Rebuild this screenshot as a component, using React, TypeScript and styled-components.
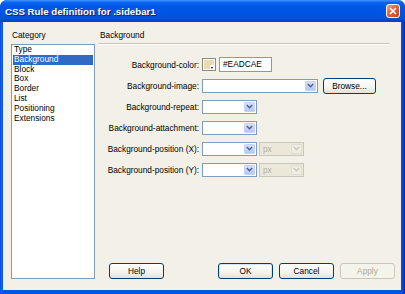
import React, {FC} from 'react';
import styled, {createGlobalStyle} from 'styled-components';

const GlobalStyle = createGlobalStyle`
  html, body {
    margin: 0;
    padding: 0;
    background: #fff;
  }
  body {
    font-family: "Liberation Sans", Arial, sans-serif;
  }
`;

const Window = styled.div`
  width: 405px;
  height: 294px;
  display: flex;
  flex-direction: column;
  background: linear-gradient(to right, #0831d9 0, #166aee 1px, #0055e5 3px, #0055e5 401px, #0a46d8 403px, #001ea0 405px);
  border-radius: 7px 7px 0 0;
  overflow: hidden;
`;

const TitleBar = styled.div`
  height: 22px;
  flex: none;
  display: flex;
  align-items: center;
  justify-content: space-between;
  padding: 0 5px 0 5px;
  background: linear-gradient(to bottom, #3d95ff 0%, #0a62f0 12%, #0056e6 30%, #0054e3 60%, #0050db 85%, #003fc0 100%);
`;

const Title = styled.span`
  color: #fff;
  font-weight: bold;
  font-size: 9.7px;
  text-shadow: 1px 1px 0 #0a1f80;
  letter-spacing: 0;
`;

const CloseButton = styled.div`
  width: 14px;
  height: 14px;
  box-sizing: border-box;
  border: 1px solid #fff;
  border-radius: 3px;
  background: linear-gradient(135deg, #f0a080 0%, #e2643c 45%, #c8411a 100%);
  display: flex;
  align-items: center;
  justify-content: center;
`;

const Body = styled.div`
  flex: 1;
  margin: 0 4px 4px 3px;
  background: #f3f1e7;
  display: flex;
  gap: 4px;
  padding: 8px 6px 11px 8px;
  font-size: 8.3px;
  color: #000;
  min-height: 0;
`;

const LeftColumn = styled.div`
  width: 84px;
  display: flex;
  flex-direction: column;
`;

const SectionLabel = styled.div`
  height: 10px;
  line-height: 10px;
  padding-left: 1px;
  margin-bottom: 4px;
`;

const CategoryList = styled.div`
  flex: 1;
  background: #fff;
  border: 1px solid #7f9db9;
  padding: 0 1px;
`;

const ListItem = styled.div<{ $selected?: boolean }>`
  height: 9.8px;
  line-height: 9.8px;
  padding-left: 1px;
  background: ${({$selected}) => ($selected ? '#316ac5' : 'transparent')};
  color: ${({$selected}) => ($selected ? '#fff' : '#000')};
`;

const RightColumn = styled.div`
  flex: 1;
  display: flex;
  flex-direction: column;
`;

const PanelHeader = styled.div`
  height: 10px;
  line-height: 10px;
  padding: 0 0 3px 1px;
  margin-right: 6px;
  border-bottom: 1px solid #c7c4b5;
  box-shadow: 0 1px 0 #fff;
`;

const Form = styled.div`
  margin-top: 10px;
  display: flex;
  flex-direction: column;
`;

const Row = styled.div`
  height: 21px;
  display: grid;
  grid-template-columns: 100px auto;
  column-gap: 3px;
  align-items: center;
`;

const Label = styled.span`
  text-align: right;
  white-space: nowrap;
`;

const Controls = styled.div<{ $gap?: number }>`
  display: flex;
  align-items: center;
  gap: ${({$gap}) => $gap ?? 2}px;
`;

const Swatch = styled.div`
  position: relative;
  width: 14px;
  height: 13px;
  box-sizing: border-box;
  border: 1px solid #8c8a80;
  background: #eadcae;
  box-shadow: inset 0 0 0 1px #fff;
`;

const SwatchArrow = styled.div`
  position: absolute;
  right: 0;
  bottom: 0;
  width: 5px;
  height: 5px;
  background: #fff;
  &::after {
    content: "";
    position: absolute;
    left: 1px;
    top: 2px;
    border-left: 1.5px solid transparent;
    border-right: 1.5px solid transparent;
    border-top: 2px solid #000;
  }
`;

const TextInput = styled.div`
  width: 53px;
  height: 15px;
  box-sizing: border-box;
  border: 1px solid #7f9db9;
  background: #fff;
  line-height: 13px;
  padding-left: 3px;
`;

const SelectBox = styled.div<{ $width: number; $disabled?: boolean }>`
  width: ${({$width}) => $width}px;
  height: 14px;
  box-sizing: border-box;
  border: 1px solid ${({$disabled}) => ($disabled ? '#c9c7ba' : '#7f9db9')};
  background: ${({$disabled}) => ($disabled ? '#ebe8da' : '#fff')};
  color: #b5b1a2;
  display: flex;
  align-items: center;
  justify-content: space-between;
  padding: 0 1px 0 3px;
`;

const ArrowButton = styled.div<{ $disabled?: boolean }>`
  width: 11px;
  height: 10px;
  border-radius: 1px;
  background: ${({$disabled}) =>
    $disabled ? '#efede3' : 'linear-gradient(to bottom, #d6e2fb, #b4c8f5)'};
  border: ${({$disabled}) => ($disabled ? '1px solid #e0ddd0' : '1px solid #c3d3fd')};
  box-sizing: border-box;
  display: flex;
  align-items: center;
  justify-content: center;
`;

const Button = styled.div<{ $width?: number; $disabled?: boolean; $default?: boolean }>`
  width: ${({$width}) => $width ?? 55}px;
  height: 16px;
  box-sizing: border-box;
  border: 1px solid ${({$disabled}) => ($disabled ? '#c9c7ba' : '#003c74')};
  border-radius: 3px;
  background: ${({$disabled}) =>
    $disabled ? '#f5f4ea' : 'linear-gradient(to bottom, #ffffff 0%, #f4f3ee 60%, #e3e1d7 100%)'};
  box-shadow: ${({$default}) => ($default ? 'inset 0 0 0 1px #cee7ff' : 'none')};
  color: ${({$disabled}) => ($disabled ? '#aca899' : '#000')};
  display: flex;
  align-items: center;
  justify-content: center;
`;

const ButtonRow = styled.div`
  margin-top: auto;
  display: flex;
  padding-left: 10px;
  gap: 6px;
`;

const Spacer = styled.div`
  flex: 1;
`;

const Chevron: FC<{ color: string }> = ({color}) => (
  <svg width="7" height="5" viewBox="0 0 7 5">
    <path d="M0.8 1 L3.5 3.7 L6.2 1" fill="none" stroke={color} strokeWidth="1.5" />
  </svg>
);

const Select: FC<{ width: number; disabled?: boolean; value?: string }> = ({width, disabled, value}) => (
  <SelectBox $width={width} $disabled={disabled}>
    <span>{value}</span>
    <ArrowButton $disabled={disabled}>
      <Chevron color={disabled ? '#c9c7ba' : '#4d6185'} />
    </ArrowButton>
  </SelectBox>
);

const categories = ['Type', 'Background', 'Block', 'Box', 'Border', 'List', 'Positioning', 'Extensions'];

const App: FC = () => {
  return (
    <>
      <GlobalStyle />
      <Window>
        <TitleBar>
          <Title>CSS Rule definition for .sidebar1</Title>
          <CloseButton>
            <svg width="8" height="8" viewBox="0 0 8 8">
              <path d="M1 1 L7 7 M7 1 L1 7" stroke="#fff" strokeWidth="1.6" />
            </svg>
          </CloseButton>
        </TitleBar>
        <Body>
          <LeftColumn>
            <SectionLabel>Category</SectionLabel>
            <CategoryList>
              {categories.map((c) => (
                <ListItem key={c} $selected={c === 'Background'}>{c}</ListItem>
              ))}
            </CategoryList>
          </LeftColumn>
          <RightColumn>
            <PanelHeader>Background</PanelHeader>
            <Form>
              <Row>
                <Label>Background-color:</Label>
                <Controls $gap={3}>
                  <Swatch><SwatchArrow /></Swatch>
                  <TextInput>#EADCAE</TextInput>
                </Controls>
              </Row>
              <Row>
                <Label>Background-image:</Label>
                <Controls $gap={5}>
                  <Select width={116} />
                  <Button $width={53}>Browse...</Button>
                </Controls>
              </Row>
              <Row>
                <Label>Background-repeat:</Label>
                <Controls>
                  <Select width={55} />
                </Controls>
              </Row>
              <Row>
                <Label>Background-attachment:</Label>
                <Controls>
                  <Select width={55} />
                </Controls>
              </Row>
              <Row>
                <Label>Background-position (X):</Label>
                <Controls>
                  <Select width={55} />
                  <Select width={45} disabled value="px" />
                </Controls>
              </Row>
              <Row>
                <Label>Background-position (Y):</Label>
                <Controls>
                  <Select width={55} />
                  <Select width={45} disabled value="px" />
                </Controls>
              </Row>
            </Form>
            <ButtonRow>
              <Button>Help</Button>
              <Spacer />
              <Button $default>OK</Button>
              <Button>Cancel</Button>
              <Button $disabled>Apply</Button>
            </ButtonRow>
          </RightColumn>
        </Body>
      </Window>
    </>
  );
};

export default App;
